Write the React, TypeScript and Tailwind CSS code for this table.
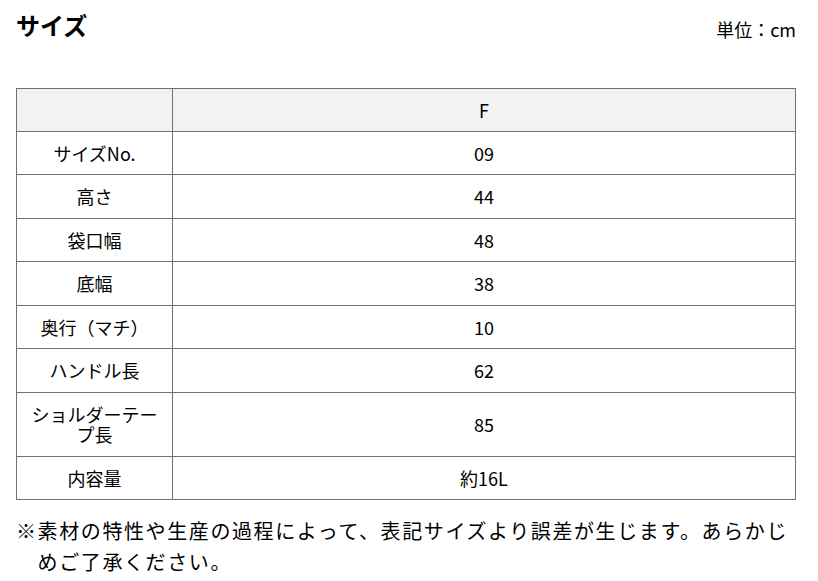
const ROWS: [string, string][] = [
  ["サイズNo.", "09"],
  ["高さ", "44"],
  ["袋口幅", "48"],
  ["底幅", "38"],
  ["奥行（マチ）", "10"],
  ["ハンドル長", "62"],
  ["ショルダーテープ長", "85"],
  ["内容量", "約16L"],
];

export default function App() {
  return (
    <div
      className="min-h-screen bg-white pl-4 pr-[22px] pt-[7px] text-black"
      style={{ fontFamily: '"Noto Sans CJK JP", "Noto Sans", sans-serif' }}
    >
      {/* HEADER */}
      <div className="flex items-end justify-between">
        <h2 className="text-[24px] font-bold leading-[36px]">サイズ</h2>
        <span className="text-[18px] leading-[27px]">単位：cm</span>
      </div>

      {/* TABLE */}
      <table className="mt-[45px] w-full border-collapse text-center text-[18px]">
        <thead>
          <tr className="bg-[#f2f2f2]">
            <th className="w-[156px] border border-[#707070] px-2 py-[10.5px] font-normal leading-[20.5px]"></th>
            <th className="border border-[#707070] px-2 py-[10.5px] font-normal leading-[20.5px]">F</th>
          </tr>
        </thead>
        <tbody>
          {ROWS.map(([label, value]) => (
            <tr key={label}>
              <td className="border border-[#707070] px-2 py-[11px] leading-[20.5px]">{label}</td>
              <td className="border border-[#707070] px-2 py-[11px] leading-[20.5px]">{value}</td>
            </tr>
          ))}
        </tbody>
      </table>

      {/* NOTE */}
      <p className="mt-[15px] pl-[21.6px] -indent-[21.6px] text-[20px] leading-[31px] tracking-[1.6px]">
        ※素材の特性や生産の過程によって、表記サイズより誤差が生じます。あらかじめご了承ください。
      </p>
    </div>
  );
}
